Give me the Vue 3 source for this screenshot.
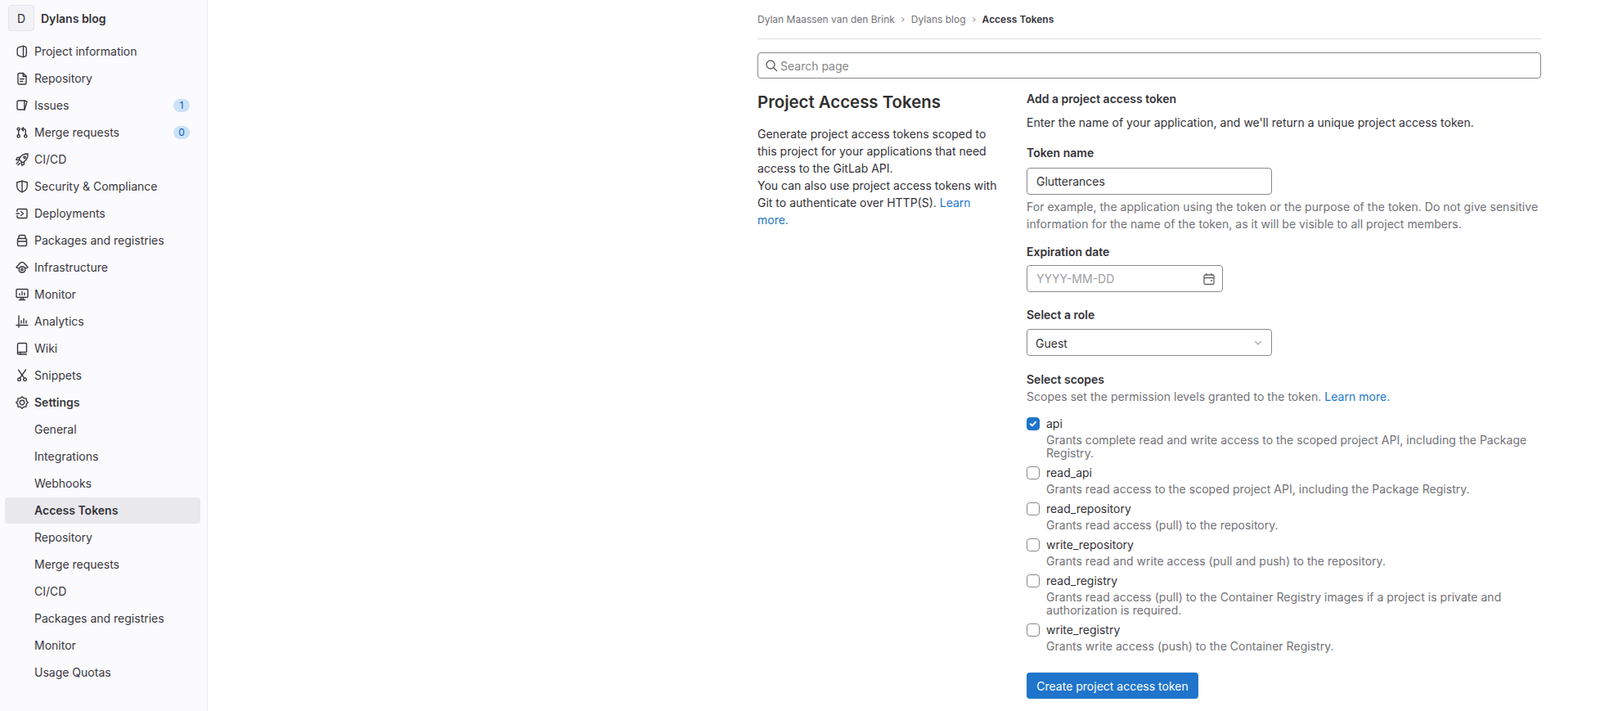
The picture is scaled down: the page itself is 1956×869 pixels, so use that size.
<script setup>
const navItems = [
  { label: "Project information", icon: ["M8.500 1.400 4 2.800c-1 .3-1.800 1-1.800 2v6.400c0 1 .8 1.700 1.800 2l4.500 1.400c.5.1.9.1 1.300 0l2.200-.8c.8-.3 1.300-1 1.300-1.900V4.100c0-.9-.5-1.600-1.300-1.900l-2.200-.8c-.4-.1-.8-.1-1.300 0Z", "M9.500 1.500v13"] },
  { label: "Repository", icon: ["M3 3c0-.8.7-1.500 1.500-1.500h5L13 5v8.500c0 .8-.7 1.500-1.500 1.500h-7C3.700 15 3 14.300 3 13.500Z", "M9.200 1.500V5.200H13", "M5.700 8.500h4.600M5.700 11.500h3"] },
  { label: "Issues", icon: ["M3.500 2h7.800l2.700 1.300-2.900 9.700H3.500C2.700 13 2 12.300 2 11.500v-8C2 2.700 2.700 2 3.500 2Z", "M10.800 2v11"], badge: 1 },
  { label: "Merge requests", icon: ["M3.700 5.500v5", "M5.300 3.700a1.600 1.600 0 1 1-3.200 0 1.600 1.600 0 0 1 3.200 0ZM5.300 12.300a1.600 1.600 0 1 1-3.200 0 1.600 1.600 0 0 1 3.200 0ZM13.900 12.300a1.600 1.600 0 1 1-3.200 0 1.600 1.600 0 0 1 3.200 0Z", "M12.300 10.500V5.500c0-1-.7-1.700-1.700-1.700H8", "M9.700 1.700 7.600 3.800l2.100 2.100"], badge: 0 },
  { label: "CI/CD", icon: ["M15 1c-4.500-.2-7.400 1.300-9.500 4.500L4.200 7.600l4.200 4.200 2.100-1.300C13.700 8.400 15.200 5.500 15 1Z", "M10.200 4.500a1.200 1.200 0 1 1 1.700 1.700 1.200 1.200 0 0 1-1.700-1.700Z", "M5.500 5.500H2.200L.8 8.200l3.800.7M10.500 10.500v3.300L7.800 15.200l-.7-3.800", "M3.600 10.600 1.200 13M5.400 12.400 3 14.800"] },
  { label: "Security & Compliance", icon: ["M8 1.200c2 1 3.800 1.500 6.200 1.500v4.800c0 3.200-2.400 5.900-6.200 7.300-3.800-1.400-6.200-4.100-6.200-7.300V2.700c2.400 0 4.200-.5 6.200-1.500Z", "M8 1.500v13"] },
  { label: "Deployments", icon: ["M2 5.500V4c0-.8.7-1.500 1.500-1.500h9c.8 0 1.500.7 1.500 1.500v8c0 .8-.7 1.500-1.500 1.500h-9C2.700 13.500 2 12.800 2 12v-1.500", "M6.500 5.500 9.500 8l-3 2.500", "M1 8h3.500"] },
  { label: "Packages and registries", icon: ["M3.500 5.500h9c.6 0 1 .4 1 1V13c0 .8-.7 1.500-1.500 1.500H4c-.8 0-1.500-.7-1.500-1.500V6.500c0-.6.4-1 1-1Z", "M4 5.500V3.200C4 2.300 4.700 1.500 5.600 1.500h4.800c.9 0 1.600.8 1.600 1.700v2.300", "M2.500 9h11"] },
  { label: "Infrastructure", icon: ["M3.300 8.800 1 7.800 5.200 2.800c1.500-1.700 4.100-1.700 5.600 0L15 7.800l-2.300 1", "M8 6.600l1 .6 1.300-.1.7 1.200.9.800-.4 1.300.4 1.300-.9.8-.7 1.200-1.300-.1-1 .6-1-.6-1.300.1-.7-1.200-.9-.8.4-1.300-.4-1.300.9-.8.7-1.200 1.300.1Z", "M9.200 10.400a1.200 1.200 0 1 1-2.400 0 1.200 1.200 0 0 1 2.400 0Z"] },
  { label: "Monitor", icon: ["M2 1.500h12c.6 0 1 .4 1 1v8c0 .6-.4 1-1 1H2c-.6 0-1-.4-1-1v-8c0-.6.4-1 1-1Z", "M4.500 14.500h7M7 11.500l-.5 3M9 11.500l.5 3", "M5 8.500V7M8 8.500V4.500M11 8.500V6"] },
  { label: "Analytics", icon: ["M4 1v14", "M1 12.500h14", "M7 10V7M10 10V4.500M13 10V7"] },
  { label: "Wiki", icon: ["M4 1.500h8.500c.6 0 1 .4 1 1v9c0 .6-.4 1-1 1H4c-.9 0-1.500.6-1.500 1.500V3c0-.9.6-1.500 1.500-1.500Z", "M2.500 14c0 .6.7 1 1.500 1h9.500", "M6 12.500V15"] },
  { label: "Snippets", icon: ["M3.500 1 10.500 10.800M12.500 1 5.500 10.800", "M6.300 12.800a1.800 1.800 0 1 1-3.600 0 1.800 1.800 0 0 1 3.600 0ZM13.300 12.800a1.800 1.800 0 1 1-3.600 0 1.800 1.800 0 0 1 3.600 0Z"] },
  { label: "Settings", bold: true, icon: ["M8 .8 10.100 2.800 13.100 2.900 13.200 5.900 15.200 8 13.200 10.100 13.100 13.100 10.100 13.200 8 15.200 5.900 13.200 2.900 13.100 2.800 10.100.8 8 2.800 5.900 2.900 2.900 5.900 2.800Z", "M10.800 8a2.800 2.800 0 1 1-5.600 0 2.800 2.800 0 0 1 5.600 0Z"] },
];

const subItems = [
  { label: "General" },
  { label: "Integrations" },
  { label: "Webhooks" },
  { label: "Access Tokens", active: true },
  { label: "Repository" },
  { label: "Merge requests" },
  { label: "CI/CD" },
  { label: "Packages and registries" },
  { label: "Monitor" },
  { label: "Usage Quotas" },
];

const scopes = [
  { name: "api", checked: true, text: "Grants complete read and write access to the scoped project API, including the Package Registry." },
  { name: "read_api", text: "Grants read access to the scoped project API, including the Package Registry." },
  { name: "read_repository", text: "Grants read access (pull) to the repository." },
  { name: "write_repository", text: "Grants read and write access (pull and push) to the repository." },
  { name: "read_registry", text: "Grants read access (pull) to the Container Registry images if a project is private and authorization is required." },
  { name: "write_registry", text: "Grants write access (push) to the Container Registry." },
];
</script>

<template>
  <div class="page">
    <aside class="sidebar">
      <div class="project">
        <span class="avatar">D</span>
        <span class="project-name">Dylans blog</span>
      </div>
      <nav>
        <a v-for="item in navItems" :key="item.label" class="nav-row" :class="{ bold: item.bold }">
          <svg class="nav-icon" viewBox="0 0 16 16" width="16" height="16" fill="none" stroke="#3a383f" stroke-width="1.400" stroke-linecap="round" stroke-linejoin="round">
            <path v-for="d in item.icon" :key="d" :d="d" />
          </svg>
          <span class="nav-label">{{ item.label }}</span>
          <span v-if="item.badge !== undefined" class="badge">{{ item.badge }}</span>
        </a>
        <a v-for="item in subItems" :key="item.label" class="nav-row sub" :class="{ active: item.active }">
          {{ item.label }}
        </a>
      </nav>
    </aside>

    <main class="content">
      <div class="breadcrumbs">
        <a>Dylan Maassen van den Brink</a>
        <svg viewBox="0 0 16 16" width="10" height="10" fill="none" stroke="#737278" stroke-width="1.600"><path d="M6 4l4 4-4 4" /></svg>
        <a>Dylans blog</a>
        <svg viewBox="0 0 16 16" width="10" height="10" fill="none" stroke="#737278" stroke-width="1.600"><path d="M6 4l4 4-4 4" /></svg>
        <strong>Access Tokens</strong>
      </div>

      <div class="search">
        <svg viewBox="0 0 16 16" width="16" height="16" fill="none" stroke="#626168" stroke-width="1.400" stroke-linecap="round"><circle cx="7" cy="7" r="5" /><path d="M11 11l3.500 3.500" /></svg>
        <input placeholder="Search page" />
      </div>

      <div class="columns">
        <section class="intro">
          <h4>Project Access Tokens</h4>
          <p>
            Generate project access tokens scoped to this project for your applications that need access to the GitLab API.<br />
            You can also use project access tokens with Git to authenticate over HTTP(S). <a class="link">Learn more.</a>
          </p>
        </section>

        <section class="form">
          <h5>Add a project access token</h5>
          <p class="lead">Enter the name of your application, and we'll return a unique project access token.</p>

          <label class="field-label">Token name</label>
          <input class="text-input wide" value="Glutterances" />
          <p class="help">For example, the application using the token or the purpose of the token. Do not give sensitive information for the name of the token, as it will be visible to all project members.</p>

          <label class="field-label expiry">Expiration date</label>
          <div class="date-input">
            <span>YYYY-MM-DD</span>
            <svg viewBox="0 0 16 16" width="16" height="16" fill="none" stroke="#626168" stroke-width="1.300"><rect x="2" y="3" width="12" height="11.500" rx="1.500" /><path d="M2 6.500h12M5 1v3M11 1v3M10 10h2" /></svg>
          </div>

          <label class="field-label role">Select a role</label>
          <div class="select">
            <span>Guest</span>
            <svg viewBox="0 0 16 16" width="12" height="12" fill="none" stroke="#a8a7ac" stroke-width="1.800" stroke-linecap="round"><path d="M3.500 6 8 10.500 12.500 6" /></svg>
          </div>

          <label class="field-label scopes-title">Select scopes</label>
          <p class="scopes-help">Scopes set the permission levels granted to the token. <a class="link">Learn more.</a></p>

          <div v-for="scope in scopes" :key="scope.name" class="scope">
            <span class="check" :class="{ checked: scope.checked }">
              <svg v-if="scope.checked" viewBox="0 0 16 16" width="16" height="16" fill="none" stroke="#fff" stroke-width="2" stroke-linecap="round" stroke-linejoin="round"><path d="M4.800 8.300 7 10.300l4.200-4.600" /></svg>
            </span>
            <div>
              <div class="scope-name">{{ scope.name }}</div>
              <div class="scope-text">{{ scope.text }}</div>
            </div>
          </div>

          <button class="create">Create project access token</button>
        </section>
      </div>
    </main>
  </div>
</template>

<style scoped>
.page {
  display: flex;
  min-height: 100vh;
  font-family: Inter, "Noto Sans", sans-serif;
  font-size: 14px;
  color: #333238;
}

.sidebar {
  width: 253px;
  flex-shrink: 0;
  background: #fbfafd;
  border-right: 1px solid #ececef;
}

.project {
  display: flex;
  align-items: center;
  gap: 8px;
  padding: 6px 0 9px 10px;
}

.avatar {
  width: 30px;
  height: 30px;
  display: flex;
  align-items: center;
  justify-content: center;
  background: #f2f1f6;
  border: 1px solid #e4e3e9;
  border-radius: 4px;
  color: #333238;
}

.project-name {
  font-weight: 600;
}

.nav-row {
  box-sizing: border-box;
  display: flex;
  align-items: center;
  height: 32px;
  margin: 0 8px 1px 6px;
  padding: 0 13px 1px;
  border-radius: 4px;
  color: #3a383f;
}

.nav-row.bold {
  font-weight: 600;
}

.nav-row.sub {
  padding-left: 36px;
}

.nav-row.active {
  background: #e9e8ed;
  font-weight: 600;
  color: #333238;
}

.nav-icon {
  margin-right: 7px;
  flex-shrink: 0;
}

.nav-label {
  flex: 1;
}

.badge {
  min-width: 8px;
  height: 16px;
  padding: 0 6px;
  line-height: 16px;
  text-align: center;
  font-size: 12px;
  color: #0b5cad;
  background: #cbe2f9;
  border-radius: 8px;
}

.content {
  width: 958px;
  margin-left: 672px;
}

.breadcrumbs {
  display: flex;
  align-items: center;
  gap: 5px;
  height: 47px;
  font-size: 12px;
  color: #737278;
  border-bottom: 1px solid #dcdcde;
}

.breadcrumbs strong {
  font-weight: 600;
  color: #333238;
}

.search {
  display: flex;
  align-items: center;
  gap: 3px;
  height: 30px;
  margin-top: 16px;
  padding: 0 8px;
  border: 1px solid #89888d;
  border-radius: 4px;
}

.search input {
  flex: 1;
  border: 0;
  outline: 0;
  padding: 0;
  font: inherit;
  color: #333238;
  background: transparent;
}

.search input::placeholder {
  color: #868686;
}

.columns {
  display: flex;
  margin-top: 13px;
}

.intro {
  width: 301px;
  margin-right: 28px;
}

.intro h4 {
  margin: 0;
  padding-top: 2px;
  font-size: 20.400px;
  line-height: 28px;
  font-weight: 600;
  color: #303030;
}

.intro p {
  margin: 14px 0 0;
  line-height: 21px;
}

.link {
  color: #1f75cb;
}

.form {
  flex: 1;
  min-width: 0;
  padding-top: 1px;
}

.form h5 {
  margin: 0;
  font-size: 14px;
  line-height: 21px;
  font-weight: 600;
}

.lead {
  margin: 8px 0 0;
  line-height: 21px;
  letter-spacing: 0.035px;
}

.field-label {
  display: block;
  margin-top: 16px;
  line-height: 21px;
  font-weight: 600;
}

.text-input {
  display: block;
  box-sizing: border-box;
  height: 33px;
  margin-top: 8px;
  padding: 0 11px;
  border: 1px solid #89888d;
  border-radius: 4px;
  font: inherit;
  color: #333238;
  outline: 0;
}

.wide {
  width: 300px;
}

.help {
  margin: 4px 0 0;
  line-height: 21px;
  color: #737278;
  letter-spacing: 0.035px;
}

.field-label.expiry {
  margin-top: 13px;
}

.date-input {
  box-sizing: border-box;
  display: flex;
  align-items: center;
  justify-content: space-between;
  width: 240px;
  height: 33px;
  margin-top: 6px;
  padding: 0 8px 0 11px;
  border: 1px solid #89888d;
  border-radius: 4px;
  color: #a0a0a4;
}

.field-label.role {
  margin-top: 17px;
}

.select {
  box-sizing: border-box;
  display: flex;
  align-items: center;
  justify-content: space-between;
  width: 300px;
  height: 33px;
  margin-top: 7px;
  padding: 0 10px;
  border: 1px solid #89888d;
  border-radius: 4px;
}

.select span {
  margin-top: 2px;
}

.field-label.scopes-title {
  margin-top: 18px;
}

.scopes-help {
  margin: 0 0 15px;
  line-height: 21px;
  color: #737278;
  letter-spacing: 0.035px;
}

.scope {
  display: flex;
  gap: 8px;
  margin-bottom: 8px;
}

.check {
  box-sizing: border-box;
  flex-shrink: 0;
  width: 16px;
  height: 16px;
  border: 1px solid #89888d;
  border-radius: 4px;
  background: #fff;
}

.check.checked {
  background: #1f75cb;
  border-color: #1f75cb;
}

.check.checked svg {
  display: block;
  margin: -1px;
}

.scope-name {
  line-height: 16px;
}

.scope-text {
  margin-top: 4px;
  line-height: 16px;
  color: #737278;
  letter-spacing: 0.035px;
}

.create {
  display: block;
  box-sizing: border-box;
  width: 210px;
  height: 32px;
  margin-top: 24px;
  border: 0;
  border-radius: 4px;
  background: #1f75cb;
  color: #fff;
  font: inherit;
}
</style>

<style>
body {
  background: #fff;
}
</style>
